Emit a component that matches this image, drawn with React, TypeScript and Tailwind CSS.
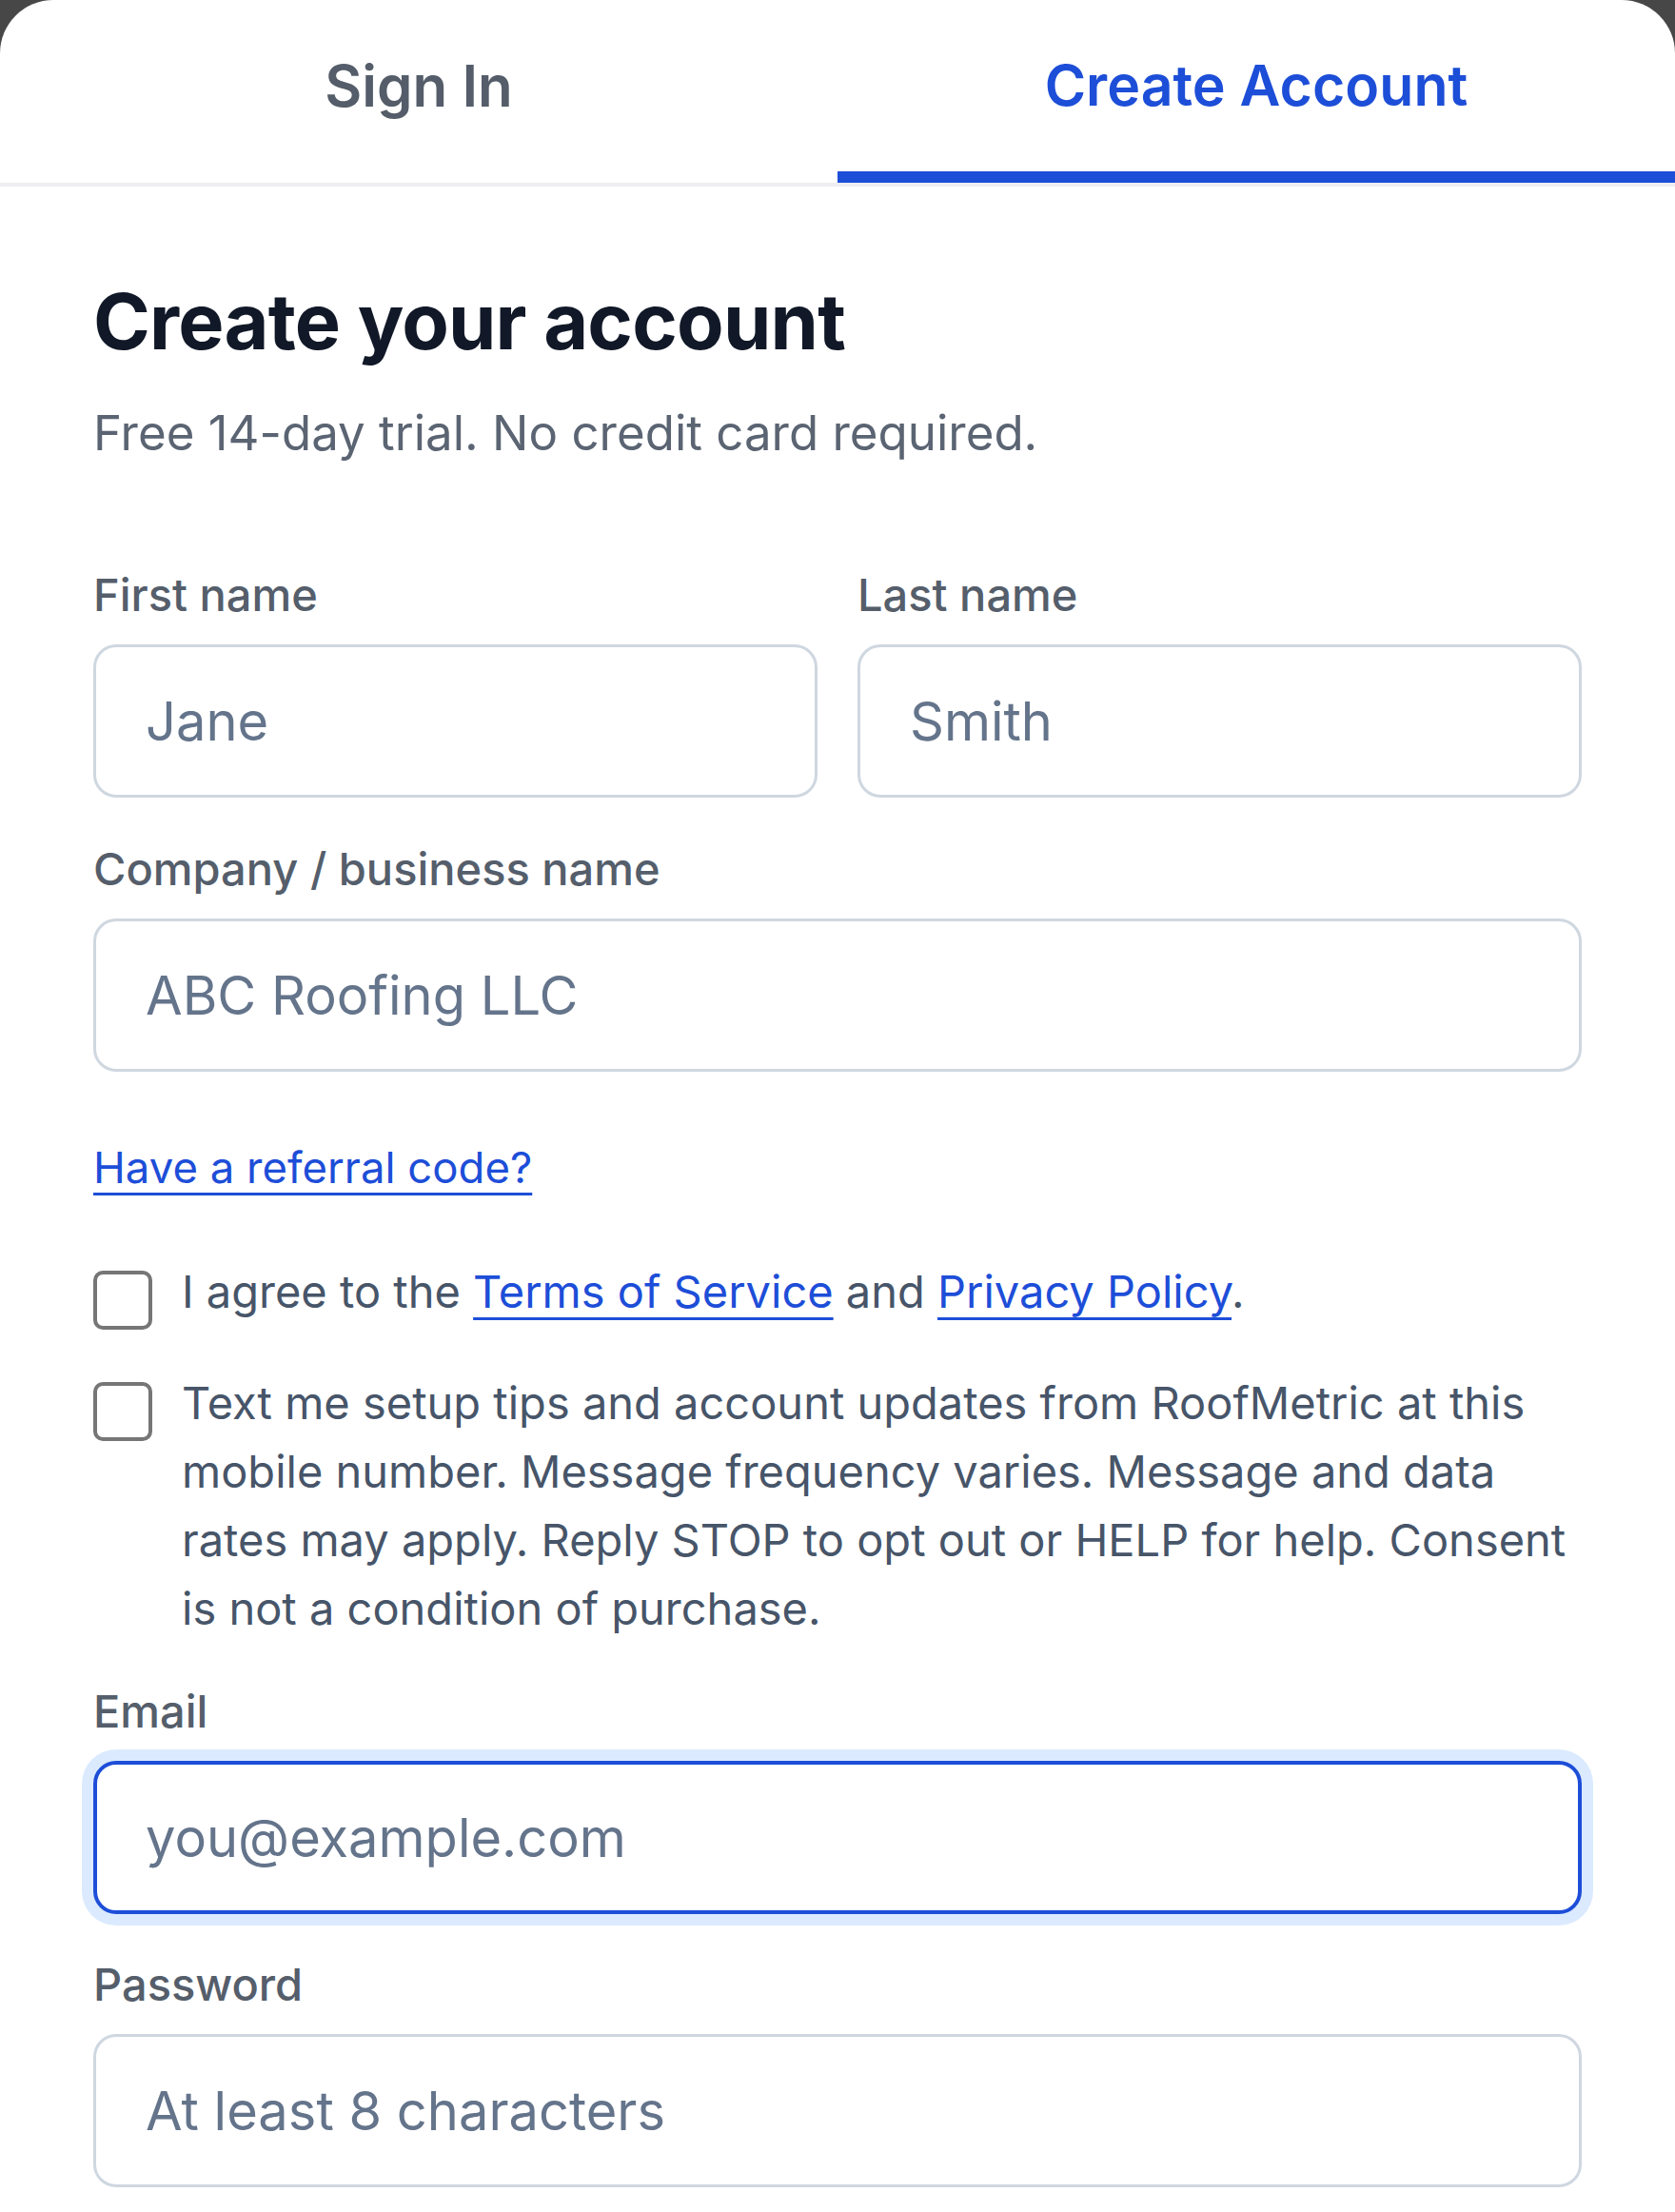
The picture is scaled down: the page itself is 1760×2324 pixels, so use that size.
import React from "react";

function Label({ children }: { children: React.ReactNode }) {
  return (
    <label className="block text-[47px] leading-[48px] font-medium text-[#555e6b]">
      {children}
    </label>
  );
}

function Field({
  placeholder,
  focused = false,
  type = "text",
}: {
  placeholder: string;
  focused?: boolean;
  type?: string;
}) {
  return (
    <input
      type={type}
      readOnly
      placeholder={placeholder}
      className={
        focused
          ? "mt-[28px] block w-full h-[161px] rounded-[24px] border-[4px] border-[#1d4ed8] bg-white px-[51px] text-[56px] text-[#0f172a] placeholder:text-[#64748b] outline-none shadow-[0_0_0_12px_#dbeafe]"
          : "mt-[28px] block w-full h-[161px] rounded-[24px] border-[3px] border-[#cfd7e0] bg-white px-[52px] text-[56px] text-[#0f172a] placeholder:text-[#64748b] outline-none"
      }
    />
  );
}

function Checkbox() {
  return (
    <span className="mt-[14px] block w-[62px] h-[62px] shrink-0 rounded-[10px] border-[4px] border-[#767676] bg-white" />
  );
}

export default function App() {
  return (
    <div className="h-[2324px] overflow-hidden bg-[#474747] font-['Inter','Noto_Sans',sans-serif]">
      <div className="h-full rounded-t-[56px] bg-white">
        {/* Tabs */}
        <div className="flex border-b-[4px] border-[#eeeef3]">
          <button className="flex-1 h-[192px] border-b-[12px] border-transparent flex items-center justify-center text-[60px] font-semibold text-[#545d69]">
            Sign In
          </button>
          <button className="flex-1 h-[192px] border-b-[12px] border-[#1d4ed8] flex items-center justify-center text-[59px] font-semibold text-[#1d4ed8]">
            Create Account
          </button>
        </div>

        {/* Content */}
        <div className="px-[98px] pt-[100px]">
          <h1 className="text-[81px] leading-[84px] font-bold text-[#111827] tracking-[-0.01em]">
            Create your account
          </h1>
          <p className="mt-[49px] text-[51px] leading-[52px] text-[#5b6472]">
            Free 14-day trial. No credit card required.
          </p>

          <div className="mt-[120px] grid grid-cols-2 gap-x-[42px]">
            <div>
              <Label>First name</Label>
              <Field placeholder="Jane" />
            </div>
            <div>
              <Label>Last name</Label>
              <Field placeholder="Smith" />
            </div>
          </div>

          <div className="mt-[51px]">
            <Label>Company / business name</Label>
            <Field placeholder="ABC Roofing LLC" />
          </div>

          <div className="mt-[77px]">
            <a
              href="#"
              className="text-[45.5px] leading-[48px] text-[#1d4ed8] underline decoration-[3px] underline-offset-[10px]"
            >
              Have a referral code?
            </a>
          </div>

          <div className="mt-[70px] flex gap-[31px]">
            <Checkbox />
            <p className="text-[47px] leading-[72px] text-[#475569]">
              I agree to the{" "}
              <a href="#" className="text-[#1d4ed8] underline decoration-[3px] underline-offset-[10px]">
                Terms of Service
              </a>{" "}
              and{" "}
              <a href="#" className="text-[#1d4ed8] underline decoration-[3px] underline-offset-[10px]">
                Privacy Policy
              </a>
              .
            </p>
          </div>

          <div className="mt-[41px] flex gap-[31px]">
            <Checkbox />
            <p className="text-[47px] leading-[72px] text-[#475569]">
              Text me setup tips and account updates from RoofMetric at this mobile number.
              Message frequency varies. Message and data rates may apply. Reply STOP to opt
              out or HELP for help. Consent is not a condition of purchase.
            </p>
          </div>

          <div className="mt-[48px]">
            <Label>Email</Label>
            <Field placeholder="you@example.com" focused type="email" />
          </div>

          <div className="mt-[50px]">
            <Label>Password</Label>
            <Field placeholder="At least 8 characters" type="password" />
          </div>
        </div>
      </div>
    </div>
  );
}
